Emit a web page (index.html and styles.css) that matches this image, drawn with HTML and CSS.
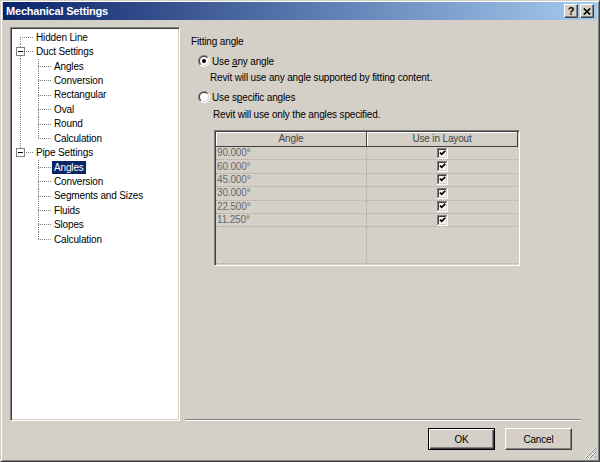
FILE: index.html
```html
<!DOCTYPE html>
<html>
<head>
<meta charset="utf-8">
<link rel="stylesheet" href="styles.css">
</head>
<body>
<div class="window">
  <div class="titlebar">
    <span class="title">Mechanical Settings</span>
    <div class="tbtns">
      <span class="tbtn q">?</span>
      <span class="tbtn"><svg width="8" height="7" viewBox="0 0 8 7"><path d="M0.8 0.5L7.2 6.5M7.2 0.5L0.8 6.5" stroke="#000" stroke-width="1.7"/></svg></span>
    </div>
  </div>

  <div class="main">
    <div class="tree">
      <div class="row"><span class="c first"></span><span class="lbl">Hidden Line</span></div>
      <div class="row"><span class="c tee"><svg class="mbox" width="9" height="9" viewBox="0 0 9 9"><rect x="0.5" y="0.5" width="8" height="8" fill="#fff" stroke="#808080"/><path d="M2 4.5h5" stroke="#000"/></svg></span><span class="lbl">Duct Settings</span></div>
      <div class="row"><span class="c v"></span><span class="c tee"></span><span class="lbl">Angles</span></div>
      <div class="row"><span class="c v"></span><span class="c tee"></span><span class="lbl">Conversion</span></div>
      <div class="row"><span class="c v"></span><span class="c tee"></span><span class="lbl">Rectangular</span></div>
      <div class="row"><span class="c v"></span><span class="c tee"></span><span class="lbl">Oval</span></div>
      <div class="row"><span class="c v"></span><span class="c tee"></span><span class="lbl">Round</span></div>
      <div class="row"><span class="c v"></span><span class="c last"></span><span class="lbl">Calculation</span></div>
      <div class="row"><span class="c last"><svg class="mbox" width="9" height="9" viewBox="0 0 9 9"><rect x="0.5" y="0.5" width="8" height="8" fill="#fff" stroke="#808080"/><path d="M2 4.5h5" stroke="#000"/></svg></span><span class="lbl">Pipe Settings</span></div>
      <div class="row"><span class="c e"></span><span class="c tee"></span><span class="lbl sel">Angles</span></div>
      <div class="row"><span class="c e"></span><span class="c tee"></span><span class="lbl">Conversion</span></div>
      <div class="row"><span class="c e"></span><span class="c tee"></span><span class="lbl">Segments and Sizes</span></div>
      <div class="row"><span class="c e"></span><span class="c tee"></span><span class="lbl">Fluids</span></div>
      <div class="row"><span class="c e"></span><span class="c tee"></span><span class="lbl">Slopes</span></div>
      <div class="row"><span class="c e"></span><span class="c last"></span><span class="lbl">Calculation</span></div>
    </div>

    <div class="panel">
      <div class="heading">Fitting angle</div>
      <div class="radio r1">
        <svg width="12" height="12" viewBox="0 0 12 12">
          <defs>
            <linearGradient id="ro" x1="0" y1="0" x2="1" y2="1"><stop offset="0.5" stop-color="#808080"/><stop offset="0.5" stop-color="#ffffff"/></linearGradient>
            <linearGradient id="ri" x1="0" y1="0" x2="1" y2="1"><stop offset="0.5" stop-color="#404040"/><stop offset="0.5" stop-color="#d4d0c8"/></linearGradient>
          </defs>
          <circle cx="6" cy="6" r="6" fill="url(#ro)"/>
          <circle cx="6" cy="6" r="5" fill="url(#ri)"/>
          <circle cx="6" cy="6" r="4" fill="#fff"/>
          <circle cx="6" cy="6" r="2" fill="#000"/>
        </svg>
        <span>Use <u>a</u>ny angle</span>
      </div>
      <div class="desc d1">Revit will use any angle supported by fitting content.</div>
      <div class="radio r2">
        <svg width="12" height="12" viewBox="0 0 12 12">
          <circle cx="6" cy="6" r="6" fill="url(#ro)"/>
          <circle cx="6" cy="6" r="5" fill="url(#ri)"/>
          <circle cx="6" cy="6" r="4" fill="#fff"/>
        </svg>
        <span>Use s<u>p</u>ecific angles</span>
      </div>
      <div class="desc d2">Revit will use only the angles specified.</div>

      <div class="grid">
        <div class="ghead"><div class="hc hl">Angle</div><div class="hc hr">Use in Layout</div></div>
        <div class="grow"><div class="gc gl">90.000°</div><div class="gc gr"><svg class="ck" width="11" height="11" viewBox="0 0 11 11"><rect width="11" height="11" fill="#fff"/><rect width="10" height="10" fill="#808080"/><rect x="1" y="1" width="9" height="9" fill="#d4d0c8"/><rect x="1" y="1" width="8" height="8" fill="#404040"/><rect x="2" y="2" width="7" height="7" fill="#f4f4f4"/><polyline points="3,4.6 4.7,6.4 8.2,2.9" fill="none" stroke="#000" stroke-width="1.7"/></svg></div></div>
        <div class="grow"><div class="gc gl">60.000°</div><div class="gc gr"><svg class="ck" width="11" height="11" viewBox="0 0 11 11"><rect width="11" height="11" fill="#fff"/><rect width="10" height="10" fill="#808080"/><rect x="1" y="1" width="9" height="9" fill="#d4d0c8"/><rect x="1" y="1" width="8" height="8" fill="#404040"/><rect x="2" y="2" width="7" height="7" fill="#f4f4f4"/><polyline points="3,4.6 4.7,6.4 8.2,2.9" fill="none" stroke="#000" stroke-width="1.7"/></svg></div></div>
        <div class="grow"><div class="gc gl">45.000°</div><div class="gc gr"><svg class="ck" width="11" height="11" viewBox="0 0 11 11"><rect width="11" height="11" fill="#fff"/><rect width="10" height="10" fill="#808080"/><rect x="1" y="1" width="9" height="9" fill="#d4d0c8"/><rect x="1" y="1" width="8" height="8" fill="#404040"/><rect x="2" y="2" width="7" height="7" fill="#f4f4f4"/><polyline points="3,4.6 4.7,6.4 8.2,2.9" fill="none" stroke="#000" stroke-width="1.7"/></svg></div></div>
        <div class="grow"><div class="gc gl">30.000°</div><div class="gc gr"><svg class="ck" width="11" height="11" viewBox="0 0 11 11"><rect width="11" height="11" fill="#fff"/><rect width="10" height="10" fill="#808080"/><rect x="1" y="1" width="9" height="9" fill="#d4d0c8"/><rect x="1" y="1" width="8" height="8" fill="#404040"/><rect x="2" y="2" width="7" height="7" fill="#f4f4f4"/><polyline points="3,4.6 4.7,6.4 8.2,2.9" fill="none" stroke="#000" stroke-width="1.7"/></svg></div></div>
        <div class="grow"><div class="gc gl">22.500°</div><div class="gc gr"><svg class="ck" width="11" height="11" viewBox="0 0 11 11"><rect width="11" height="11" fill="#fff"/><rect width="10" height="10" fill="#808080"/><rect x="1" y="1" width="9" height="9" fill="#d4d0c8"/><rect x="1" y="1" width="8" height="8" fill="#404040"/><rect x="2" y="2" width="7" height="7" fill="#f4f4f4"/><polyline points="3,4.6 4.7,6.4 8.2,2.9" fill="none" stroke="#000" stroke-width="1.7"/></svg></div></div>
        <div class="grow"><div class="gc gl">11.250°</div><div class="gc gr"><svg class="ck" width="11" height="11" viewBox="0 0 11 11"><rect width="11" height="11" fill="#fff"/><rect width="10" height="10" fill="#808080"/><rect x="1" y="1" width="9" height="9" fill="#d4d0c8"/><rect x="1" y="1" width="8" height="8" fill="#404040"/><rect x="2" y="2" width="7" height="7" fill="#f4f4f4"/><polyline points="3,4.6 4.7,6.4 8.2,2.9" fill="none" stroke="#000" stroke-width="1.7"/></svg></div></div>
        <div class="grow filler"><div class="gc gl"></div><div class="gc gr"></div></div>
      </div>
    </div>
  </div>

  <div class="footer">
    <button class="btn default">OK</button>
    <button class="btn">Cancel</button>
  </div>

  <svg class="grip" width="12" height="12" viewBox="0 0 12 12">
    <path d="M11 1L1 11M11 5L5 11M11 9L9 11" stroke="#808080" stroke-width="1"/>
    <path d="M12 1L1 12M12 5L5 12M12 9L9 12" stroke="#ffffff" stroke-width="1" transform="translate(-2 0)"/>
  </svg>
</div>
</body>
</html>
```

FILE: styles.css
```css
html, body {
  margin: 0;
  padding: 0;
  background: #d4d0c8;
}

.window {
  position: relative;
  width: 600px;
  height: 462px;
  box-sizing: border-box;
  background: #d4d0c8;
  border: 1px solid;
  border-color: #d4d0c8 #404040 #404040 #d4d0c8;
  box-shadow: inset 1px 1px 0 #ffffff, inset -1px -1px 0 #808080;
  padding: 1px 2px 0 2px;
  font-family: "Liberation Sans", Arial, sans-serif;
  font-size: 10px;
  letter-spacing: -0.15px;
  color: #000;
  display: flex;
  flex-direction: column;
}

.titlebar {
  height: 18px;
  flex: none;
  display: flex;
  align-items: center;
  justify-content: space-between;
  background: linear-gradient(to right, #0a246a, #a6caf0);
  padding-left: 3px;
  padding-right: 3px;
}

.title {
  color: #fff;
  font-weight: bold;
  font-size: 11px;
  letter-spacing: -0.2px;
}

.tbtns {
  display: flex;
  gap: 2px;
}

.tbtn {
  width: 14px;
  height: 14px;
  box-sizing: border-box;
  background: #d4d0c8;
  border: 1px solid;
  border-color: #ffffff #404040 #404040 #ffffff;
  box-shadow: inset -1px -1px 0 #808080;
  display: flex;
  align-items: center;
  justify-content: center;
  font-weight: bold;
  font-size: 11px;
  line-height: 12px;
}

.tbtn.q {
  padding-bottom: 1px;
}

.main {
  display: flex;
  margin-top: 7px;
  margin-left: 7px;
  height: 394px;
  flex: none;
}

.tree {
  width: 170px;
  height: 394px;
  box-sizing: border-box;
  background: #fff;
  border: 1px solid;
  border-color: #808080 #ffffff #ffffff #808080;
  box-shadow: inset 1px 1px 0 #404040, inset -1px -1px 0 #d4d0c8;
  padding: 2px 0 0 1px;
}

.row {
  height: 14.43px;
  display: flex;
  align-items: center;
}

.c {
  flex: none;
  width: 22px;
  height: 100%;
  display: flex;
  align-items: center;
  background-repeat: no-repeat;
}

.c.v, .c.e {
  width: 18px;
}

.c.v {
  background-image: repeating-linear-gradient(to bottom, #808080 0 1px, transparent 1px 2px);
  background-position: 8px 0;
  background-size: 1px 100%;
}

.c.tee {
  background-image:
    repeating-linear-gradient(to bottom, #808080 0 1px, transparent 1px 2px),
    repeating-linear-gradient(to right, #808080 0 1px, transparent 1px 2px);
  background-position: 8px 0, 8px 7px;
  background-size: 1px 100%, 14px 1px;
}

.c.first {
  background-image:
    repeating-linear-gradient(to bottom, #808080 0 1px, transparent 1px 2px),
    repeating-linear-gradient(to right, #808080 0 1px, transparent 1px 2px);
  background-position: 8px 7px, 8px 7px;
  background-size: 1px 8px, 14px 1px;
}

.c.last {
  background-image:
    repeating-linear-gradient(to bottom, #808080 0 1px, transparent 1px 2px),
    repeating-linear-gradient(to right, #808080 0 1px, transparent 1px 2px);
  background-position: 8px 0, 8px 7px;
  background-size: 1px 7px, 14px 1px;
}

.mbox {
  margin-left: 4px;
  display: block;
}

.lbl {
  padding: 0 2px;
  line-height: 13px;
  white-space: nowrap;
}

.lbl.sel {
  background: #0a246a;
  color: #fff;
}

.panel {
  margin-left: 5px;
  width: 396px;
  height: 394px;
  box-sizing: border-box;
  border-bottom: 1px solid #ffffff;
  box-shadow: inset 0 -1px 0 #808080;
  padding: 8px 0 0 6px;
  display: flex;
  flex-direction: column;
}

.heading {
  line-height: 14px;
}

.radio {
  display: flex;
  align-items: center;
  gap: 2px;
  height: 14px;
  margin-left: 7px;
}

.radio svg {
  display: block;
  flex: none;
}

.r1 {
  margin-top: 5px;
}

.r2 {
  margin-top: 5px;
}

.desc {
  line-height: 14px;
}

.d1 {
  margin-top: 3px;
  margin-left: 19px;
}

.d2 {
  margin-top: 4px;
  margin-left: 22px;
}

.grid {
  margin-top: 8px;
  margin-left: 23px;
  width: 306px;
  height: 136px;
  box-sizing: border-box;
  border: 1px solid;
  border-color: #808080 #ffffff #ffffff #808080;
  box-shadow: inset 1px 1px 0 #404040, inset -1px -1px 0 #d4d0c8;
  padding: 1px 1px 1px 1px;
  display: flex;
  flex-direction: column;
}

.ghead {
  display: flex;
  height: 15px;
  flex: none;
}

.hc {
  box-sizing: border-box;
  height: 15px;
  line-height: 13px;
  text-align: center;
  color: #444;
  border-right: 1px solid #404040;
  border-bottom: 1px solid #404040;
  box-shadow: inset 1px 1px 0 #ffffff;
}

.hl {
  width: 151px;
  flex: none;
}

.hr {
  flex: 1;
}

.grow {
  display: flex;
  height: 13.4px;
  flex: none;
  box-sizing: border-box;
  border-bottom: 1px dotted #a8a8a8;
}

.grow.filler {
  flex: 1;
  height: auto;
}

.gc {
  box-sizing: border-box;
  display: flex;
  align-items: center;
  color: #6a6a6a;
  line-height: 12px;
}

.gl {
  width: 151px;
  flex: none;
  padding-left: 1px;
  border-right: 1px dotted #a8a8a8;
}

.gr {
  flex: 1;
  justify-content: center;
}

.ck {
  display: block;
}

.footer {
  display: flex;
  justify-content: flex-end;
  gap: 10px;
  margin-top: 7px;
  padding-right: 25px;
}

.btn {
  width: 67px;
  height: 22px;
  box-sizing: border-box;
  margin: 0;
  padding: 0;
  background: #d4d0c8;
  font-family: "Liberation Sans", Arial, sans-serif;
  font-size: 10px;
  letter-spacing: -0.15px;
  color: #000;
  border: 1px solid;
  border-color: #ffffff #404040 #404040 #ffffff;
  box-shadow: inset -1px -1px 0 #808080;
}

.btn.default {
  border-color: #000;
  box-shadow: inset 1px 1px 0 #ffffff, inset -1px -1px 0 #404040, inset -2px -2px 0 #808080;
}

.grip {
  position: absolute;
  right: 2px;
  bottom: 2px;
}
```
